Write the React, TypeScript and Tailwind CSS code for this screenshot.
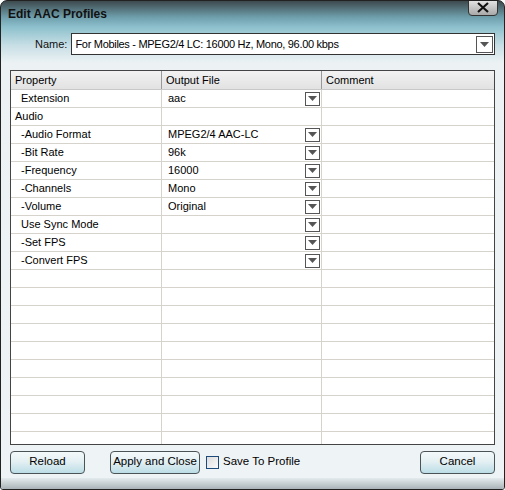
import { ReactNode } from "react";

const rows: { label: string; indent: boolean; value: string; drop: boolean }[] = [
  { label: "Extension", indent: true, value: "aac", drop: true },
  { label: "Audio", indent: false, value: "", drop: false },
  { label: "-Audio Format", indent: true, value: "MPEG2/4 AAC-LC", drop: true },
  { label: "-Bit Rate", indent: true, value: "96k", drop: true },
  { label: "-Frequency", indent: true, value: "16000", drop: true },
  { label: "-Channels", indent: true, value: "Mono", drop: true },
  { label: "-Volume", indent: true, value: "Original", drop: true },
  { label: "Use Sync Mode", indent: true, value: "", drop: true },
  { label: "-Set FPS", indent: true, value: "", drop: true },
  { label: "-Convert FPS", indent: true, value: "", drop: true },
];

function DropArrow({ big }: { big?: boolean }) {
  return (
    <div
      className={
        big
          ? "w-[17px] h-[17px] border border-[#555] bg-white flex items-center justify-center"
          : "w-[15px] h-[14px] border border-[#555] bg-white flex items-center justify-center"
      }
    >
      <svg width="9" height="5" viewBox="0 0 9 5">
        <path d="M0 0h9L4.5 5z" fill="#555" />
      </svg>
    </div>
  );
}

function Button({ children, w }: { children: ReactNode; w: string }) {
  return (
    <button
      className={`${w} h-[23px] rounded-[4px] border border-[#4a5356] bg-[linear-gradient(to_bottom,#f4f9fa,#e4f0f3_45%,#bcdde6)] text-[11.5px] text-black`}
    >
      {children}
    </button>
  );
}

export default function App() {
  const empty = Array.from({ length: 10 });
  return (
    <div className="w-[505px] h-[490px] font-['Liberation_Sans',Arial,sans-serif] text-[11px] text-black">
      <div className="w-full h-full flex flex-col rounded-t-[7px] rounded-b-[3px] border border-[#222] bg-[linear-gradient(to_bottom,#3d494d_0px,#6e9eab_16px,#8cc0cc_26px,#c7dee5_44px,#ecf2f4_62px,#eef3f6_100%)] overflow-hidden">
        <div className="h-[26px] flex items-start justify-between pl-[7px] pr-[6px]">
          <span className="mt-[4px] text-[12px] font-bold text-[#111]">Edit AAC Profiles</span>
          <div className="mt-[-2px] w-[30px] h-[17px] rounded-b-[4px] border border-[#333] bg-[linear-gradient(to_bottom,#e6e6e6,#a9a9a9)] flex items-center justify-center">
            <svg width="12" height="11" viewBox="0 0 12 11">
              <path d="M1 1l10 9M11 1L1 10" stroke="#111" strokeWidth="2.2" />
            </svg>
          </div>
        </div>
        <div className="flex items-center pl-[34px] pr-[9px] mt-[6px]">
          <span className="text-[11px] text-[#111] mr-[4px]">Name:</span>
          <div className="flex-1 h-[22px] border border-[#333] bg-white flex items-center justify-between pl-[3px] pr-[1px]">
            <span className="text-[11px] tracking-[-0.3px]">For Mobiles - MPEG2/4 LC: 16000 Hz, Mono, 96.00 kbps</span>
            <DropArrow big />
          </div>
        </div>
        <div className="mx-[9px] mt-[15px] h-[375px] border border-[#444] bg-white overflow-hidden">
          <div className="grid grid-cols-[151px_160px_1fr] h-[19px] bg-[linear-gradient(to_bottom,#f2f2f2,#e2e2e2)] border-b border-[#c8c8c8]">
            <div className="pl-[4px] leading-[18px] border-r border-[#999]">Property</div>
            <div className="pl-[4px] leading-[18px] border-r border-[#999]">Output File</div>
            <div className="pl-[4px] leading-[18px]">Comment</div>
          </div>
          {rows.map((r) => (
            <div key={r.label} className="grid grid-cols-[151px_160px_1fr] h-[18px] border-b border-[#d6d3cc]">
              <div className={`${r.indent ? "pl-[10px]" : "pl-[4px]"} leading-[17px] border-r border-[#d6d3cc]`}>
                {r.label}
              </div>
              <div className="pl-[6px] pr-[1px] flex items-center justify-between border-r border-[#d6d3cc]">
                <span>{r.value}</span>
                {r.drop && <DropArrow />}
              </div>
              <div />
            </div>
          ))}
          {empty.map((_, i) => (
            <div key={i} className="grid grid-cols-[151px_160px_1fr] h-[18px] border-b border-[#d6d3cc]">
              <div className="border-r border-[#d6d3cc]" />
              <div className="border-r border-[#d6d3cc]" />
              <div />
            </div>
          ))}
        </div>
        <div className="flex items-center px-[9px] mt-[5px] h-[24px]">
          <Button w="w-[75px]">Reload</Button>
          <div className="w-[25px]" />
          <Button w="w-[90px]">Apply and Close</Button>
          <div className="ml-[6px] w-[13px] h-[13px] border border-[#1c4a7a] bg-[linear-gradient(135deg,#dcdcdc,#fafafa)]" />
          <span className="ml-[4px] text-[11.5px]">Save To Profile</span>
          <div className="flex-1" />
          <Button w="w-[75px]">Cancel</Button>
        </div>
        <div className="flex-1 mt-[4px] bg-[linear-gradient(to_bottom,#e4ebee,#a9b3b7)]" />
      </div>
    </div>
  );
}
